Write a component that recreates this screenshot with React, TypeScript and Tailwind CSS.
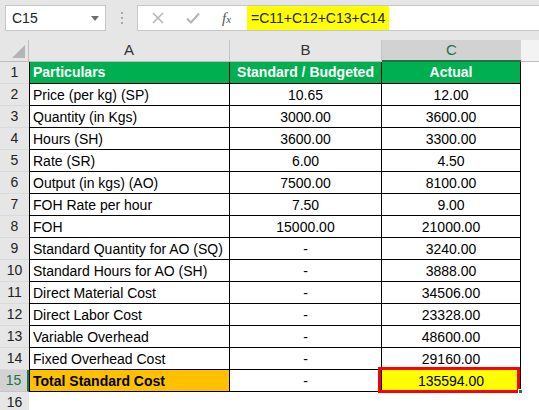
import React from 'react';

type Row = {
  n: number;
  a: string;
  b: string;
  c: string;
};

const rows: Row[] = [
  { n: 2, a: 'Price (per kg) (SP)', b: '10.65', c: '12.00' },
  { n: 3, a: 'Quantity (in Kgs)', b: '3000.00', c: '3600.00' },
  { n: 4, a: 'Hours (SH)', b: '3600.00', c: '3300.00' },
  { n: 5, a: 'Rate (SR)', b: '6.00', c: '4.50' },
  { n: 6, a: 'Output (in kgs) (AO)', b: '7500.00', c: '8100.00' },
  { n: 7, a: 'FOH Rate per hour', b: '7.50', c: '9.00' },
  { n: 8, a: 'FOH', b: '15000.00', c: '21000.00' },
  { n: 9, a: 'Standard Quantity for AO (SQ)', b: '-', c: '3240.00' },
  { n: 10, a: 'Standard Hours for AO (SH)', b: '-', c: '3888.00' },
  { n: 11, a: 'Direct Material Cost', b: '-', c: '34506.00' },
  { n: 12, a: 'Direct Labor Cost', b: '-', c: '23328.00' },
  { n: 13, a: 'Variable Overhead', b: '-', c: '48600.00' },
  { n: 14, a: 'Fixed Overhead Cost', b: '-', c: '29160.00' },
];

function RowHead({ n, active }: { n: number; active?: boolean }) {
  return (
    <div
      className={
        active
          ? 'flex h-full w-[29px] shrink-0 items-center justify-center border-b border-r-2 border-b-[#c6c6c6] border-r-[#217346] bg-[#d2d2d2] text-[#217346]'
          : 'flex h-full w-[29px] shrink-0 items-center justify-center border-b border-[#dadada] bg-[#e6e6e6] text-[#222]'
      }
    >
      {n}
    </div>
  );
}

function FormulaBar() {
  return (
    <div className="flex h-[40px] items-start bg-[#e6e6e6] pt-[5px]">
      {/* name box */}
      <div className="ml-[5px] flex h-[26px] w-[101px] items-center justify-between border border-[#c6c6c6] bg-white pl-[6px] pr-[6px]">
        <span className="text-[14px] text-[#222]">C15</span>
        <svg width="8" height="5" viewBox="0 0 8 5">
          <path d="M0 0 L8 0 L4 5 Z" fill="#6d6d6d" />
        </svg>
      </div>
      <div className="flex h-[26px] w-[31px] flex-col items-center justify-center gap-[3px]">
        <span className="h-[2px] w-[2px] bg-[#a9a9a9]" />
        <span className="h-[2px] w-[2px] bg-[#a9a9a9]" />
        <span className="h-[2px] w-[2px] bg-[#a9a9a9]" />
      </div>
      {/* formula input */}
      <div className="flex h-[26px] flex-1 items-stretch border border-r-0 border-[#c6c6c6] bg-white">
        <div className="flex w-[109px] items-center pl-[14px]">
          <svg width="12" height="12" viewBox="0 0 12 12">
            <path d="M1 1 L11 11 M11 1 L1 11" stroke="#b4b4b4" strokeWidth="1.5" />
          </svg>
          <svg width="14" height="12" viewBox="0 0 14 12" className="ml-[22px]">
            <path d="M1 6.5 L5 10.5 L13 1.5" stroke="#b4b4b4" strokeWidth="2" fill="none" />
          </svg>
          <span className="ml-[22px] font-['Liberation_Serif',serif] text-[15px] italic text-[#555]">
            f<span className="text-[11px]">x</span>
          </span>
        </div>
        <div className="flex w-[142px] items-center bg-[#ffff00] pl-[4px] text-[14px] text-[#222]">
          =C11+C12+C13+C14
        </div>
      </div>
    </div>
  );
}

export default function App() {
  return (
    <div className="h-[410px] w-[539px] overflow-hidden bg-white font-['Liberation_Sans',Arial,sans-serif] text-[14px] text-black">
      <FormulaBar />

      {/* column headers */}
      <div className="flex h-[22px] text-[15px]">
        <div className="relative w-[29px] shrink-0 border-b border-r border-[#bdbdbd] bg-[#e6e6e6]">
          <svg width="13" height="13" viewBox="0 0 13 13" className="absolute bottom-[3px] right-[3px]">
            <path d="M13 0 L13 13 L0 13 Z" fill="#b4b4b4" />
          </svg>
        </div>
        <div className="flex w-[201px] items-center justify-center border-b border-r border-b-[#bdbdbd] border-r-[#c6c6c6] bg-[#e6e6e6] text-[#333]">
          A
        </div>
        <div className="flex w-[152px] items-center justify-center border-b border-r border-b-[#bdbdbd] border-r-[#c6c6c6] bg-[#e6e6e6] text-[#333]">
          B
        </div>
        <div className="flex w-[139px] items-center justify-center border-b-2 border-[#217346] bg-[#d2d2d2] text-[#217346]">
          C
        </div>
        <div className="flex-1 border-b border-[#bdbdbd] bg-[#f3f3f3]" />
      </div>

      {/* row 1: headings */}
      <div className="flex h-[22px]">
        <RowHead n={1} />
        <div className="flex w-[201px] items-center border-b border-l border-r border-black bg-[#00b050] pl-[3px] font-bold text-white">
          Particulars
        </div>
        <div className="flex w-[152px] items-center justify-center border-b border-r border-black bg-[#00b050] font-bold text-white">
          Standard / Budgeted
        </div>
        <div className="flex w-[139px] items-center justify-center border-b border-r border-black bg-[#00b050] font-bold text-white">
          Actual
        </div>
      </div>

      {rows.map((r) => (
        <div key={r.n} className="flex h-[22px]">
          <RowHead n={r.n} />
          <div className="flex w-[201px] items-center border-b border-l border-r border-black pl-[3px] pt-[1px]">
            {r.a}
          </div>
          <div className="flex w-[152px] items-center justify-center border-b border-r border-black pt-[1px]">
            {r.b}
          </div>
          <div className="flex w-[139px] items-center justify-center border-b border-r border-black pt-[1px]">
            {r.c}
          </div>
        </div>
      ))}

      {/* row 15: total */}
      <div className="flex h-[22px]">
        <RowHead n={15} active />
        <div className="flex w-[201px] items-center border-b border-l border-r border-black bg-[#ffc000] pl-[3px] pt-[1px] font-bold">
          Total Standard Cost
        </div>
        <div className="flex w-[152px] items-center justify-center border-b border-r border-black pt-[1px]">
          -
        </div>
        <div className="relative flex w-[139px] items-center justify-center border-b border-r border-black bg-[#ffff00] pt-[1px]">
          135594.00
          {/* active cell selection */}
          <div className="absolute -bottom-[2px] -left-[4px] -top-[3px] right-0 border-[3px] border-[#ff0000]" />
          <div className="absolute -bottom-[3px] -right-[3px] h-[5px] w-[5px] border border-white bg-[#217346]" />
        </div>
      </div>

      {/* row 16 */}
      <div className="flex h-[22px]">
        <RowHead n={16} />
      </div>
    </div>
  );
}
